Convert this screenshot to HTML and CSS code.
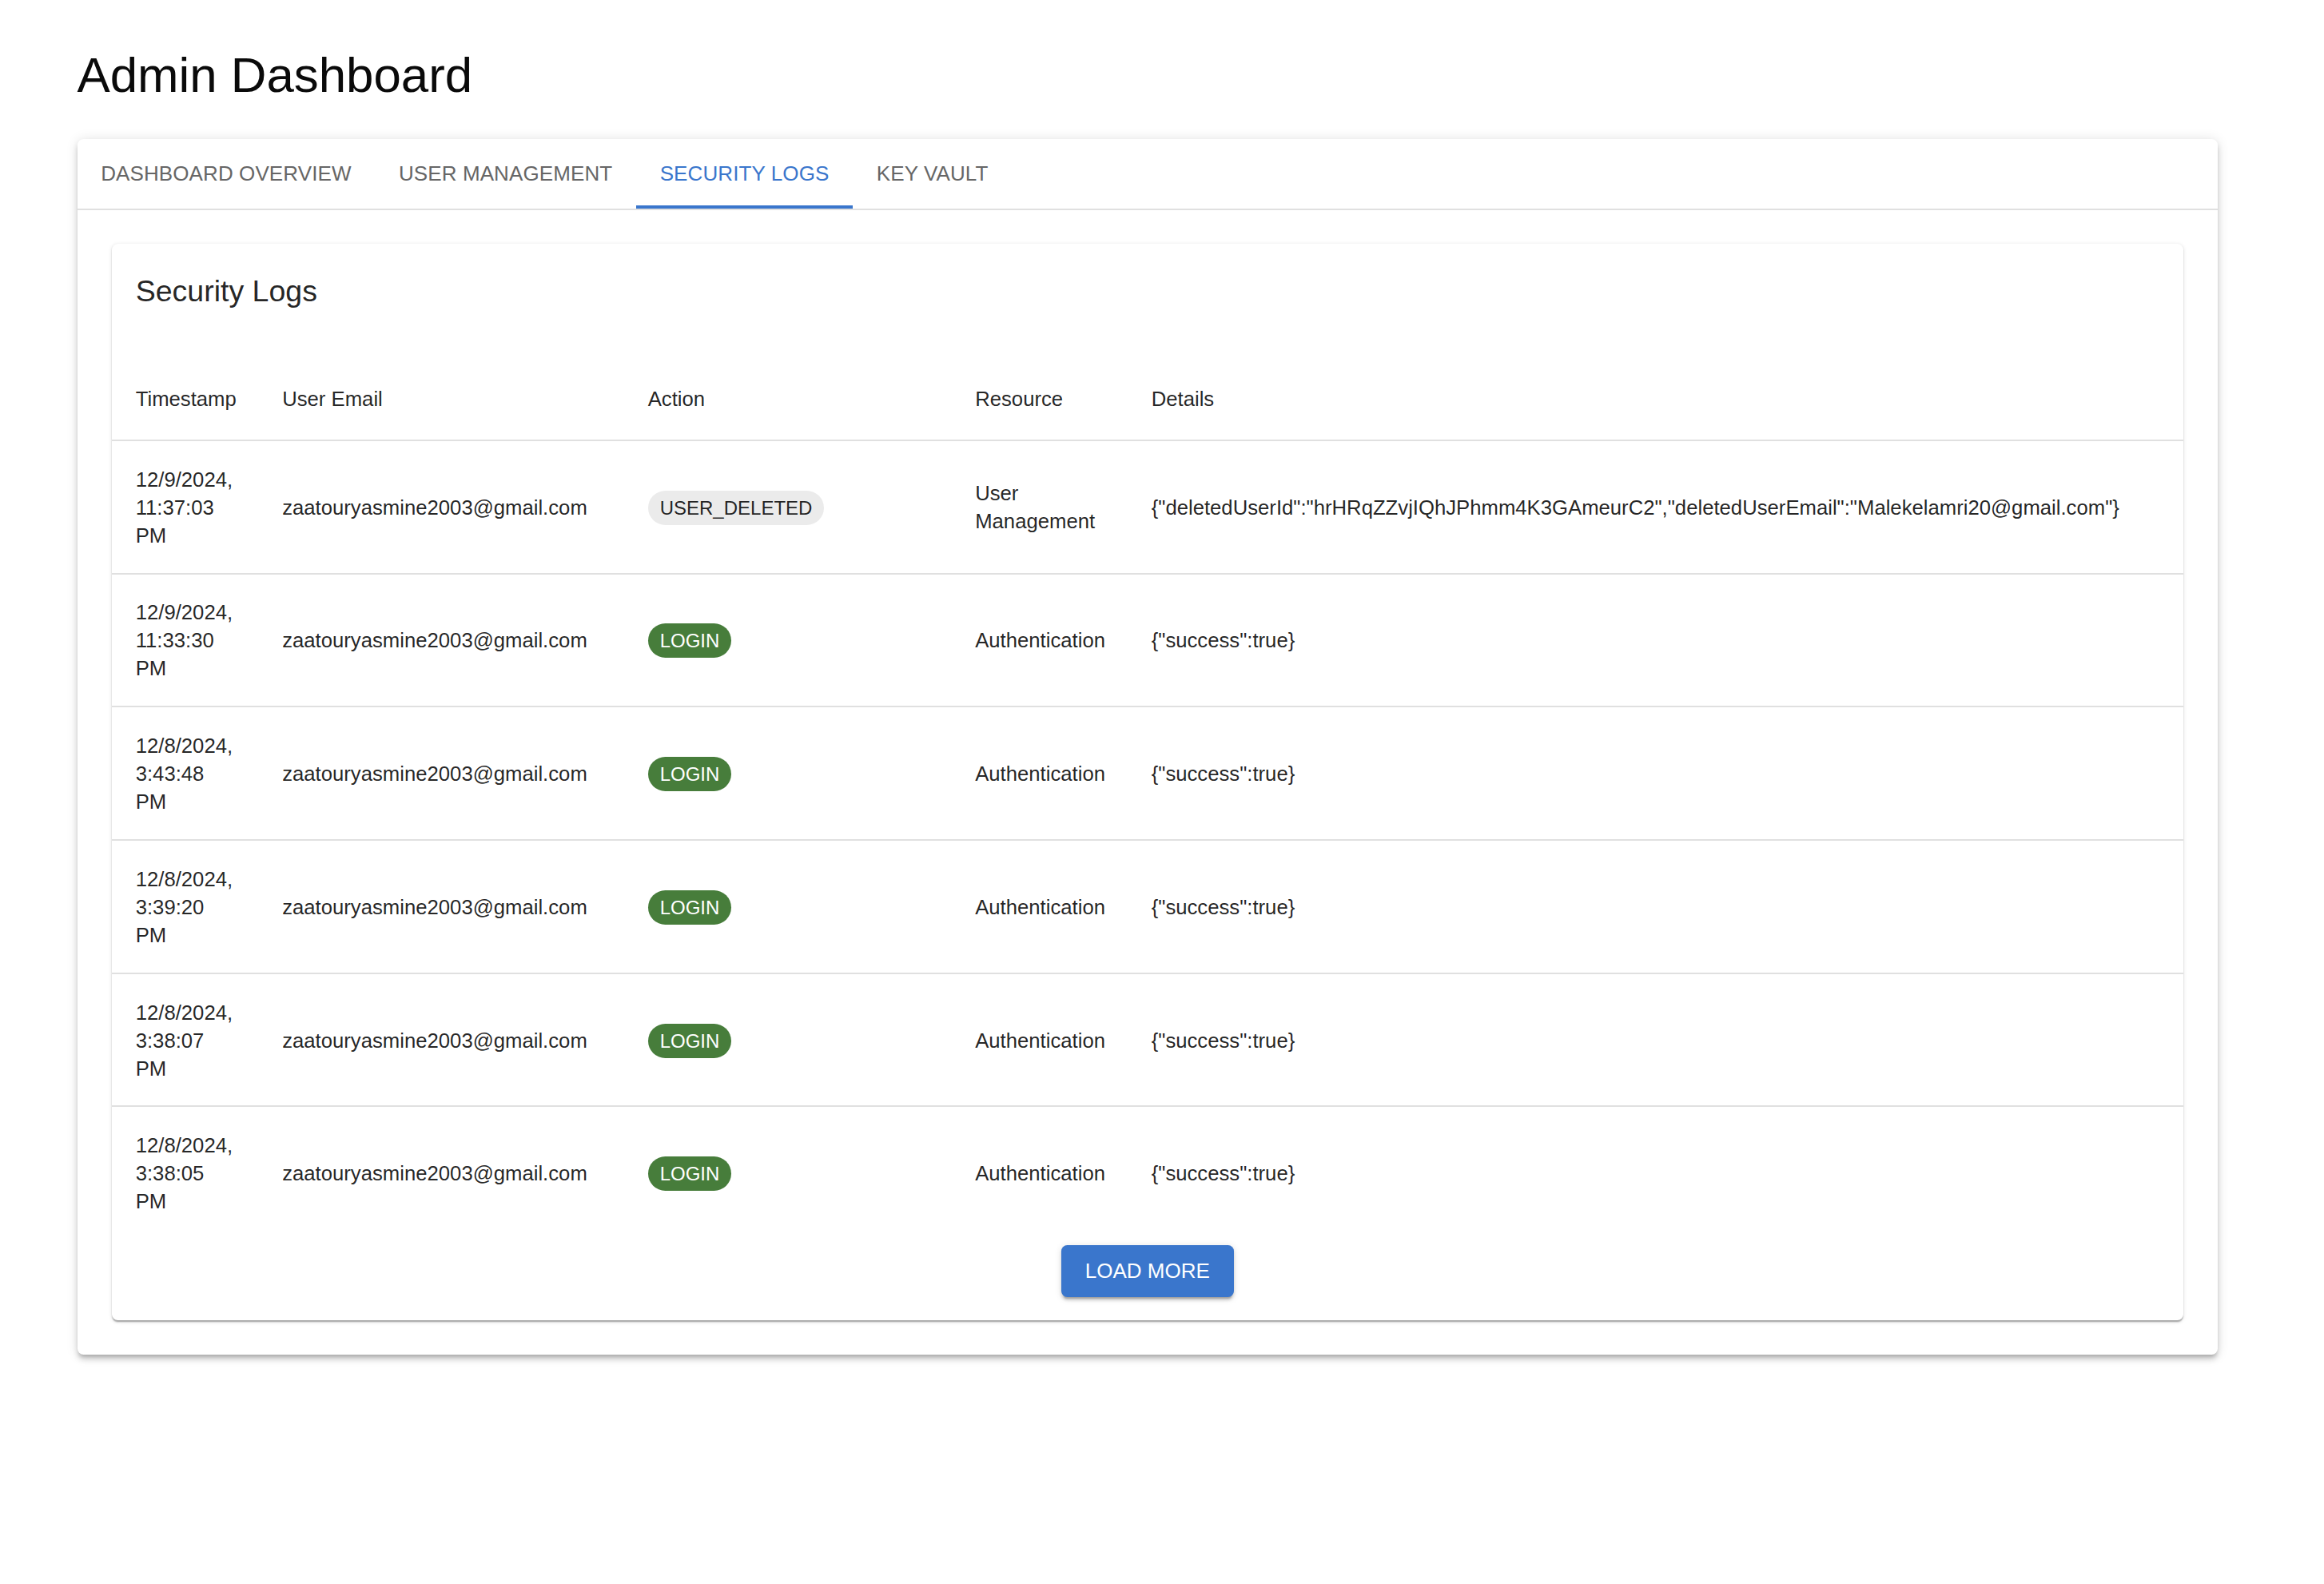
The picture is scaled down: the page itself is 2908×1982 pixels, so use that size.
FILE: index.html
```html
<!DOCTYPE html>
<html lang="en">
<head>
<meta charset="utf-8">
<title>Admin Dashboard</title>
<link rel="stylesheet" href="styles.css">
</head>
<body>
<div class="page">
  <h1 class="page-title">Admin Dashboard</h1>
  <div class="paper">
    <div class="tabs">
      <div class="tab">DASHBOARD OVERVIEW</div>
      <div class="tab">USER MANAGEMENT</div>
      <div class="tab active">SECURITY LOGS</div>
      <div class="tab">KEY VAULT</div>
    </div>
    <div class="panel">
      <div class="card">
        <h2 class="card-title">Security Logs</h2>
        <table class="logs">
          <colgroup>
            <col class="c-time">
            <col class="c-email">
            <col class="c-action">
            <col class="c-resource">
            <col>
          </colgroup>
          <thead>
            <tr>
              <th>Timestamp</th>
              <th>User Email</th>
              <th>Action</th>
              <th>Resource</th>
              <th>Details</th>
            </tr>
          </thead>
          <tbody>
            <tr>
              <td>12/9/2024, 11:37:03 PM</td>
              <td>zaatouryasmine2003@gmail.com</td>
              <td><span class="chip chip-default">USER_DELETED</span></td>
              <td>User Management</td>
              <td>{"deletedUserId":"hrHRqZZvjIQhJPhmm4K3GAmeurC2","deletedUserEmail":"Malekelamri20@gmail.com"}</td>
            </tr>
            <tr>
              <td>12/9/2024, 11:33:30 PM</td>
              <td>zaatouryasmine2003@gmail.com</td>
              <td><span class="chip chip-success">LOGIN</span></td>
              <td>Authentication</td>
              <td>{"success":true}</td>
            </tr>
            <tr>
              <td>12/8/2024, 3:43:48 PM</td>
              <td>zaatouryasmine2003@gmail.com</td>
              <td><span class="chip chip-success">LOGIN</span></td>
              <td>Authentication</td>
              <td>{"success":true}</td>
            </tr>
            <tr>
              <td>12/8/2024, 3:39:20 PM</td>
              <td>zaatouryasmine2003@gmail.com</td>
              <td><span class="chip chip-success">LOGIN</span></td>
              <td>Authentication</td>
              <td>{"success":true}</td>
            </tr>
            <tr>
              <td>12/8/2024, 3:38:07 PM</td>
              <td>zaatouryasmine2003@gmail.com</td>
              <td><span class="chip chip-success">LOGIN</span></td>
              <td>Authentication</td>
              <td>{"success":true}</td>
            </tr>
            <tr>
              <td>12/8/2024, 3:38:05 PM</td>
              <td>zaatouryasmine2003@gmail.com</td>
              <td><span class="chip chip-success">LOGIN</span></td>
              <td>Authentication</td>
              <td>{"success":true}</td>
            </tr>
          </tbody>
        </table>
        <div class="actions">
          <button class="btn" type="button">LOAD MORE</button>
        </div>
      </div>
    </div>
  </div>
</div>
</body>
</html>
```
FILE: styles.css
```css
html, body {
  margin: 0;
  padding: 0;
  background: #ffffff;
}

body {
  font-family: "Liberation Sans", Arial, Helvetica, sans-serif;
  color: rgba(0, 0, 0, 0.87);
}

.page {
  padding: 55px 133px 120px 96.5px;
}

.page-title {
  margin: 0 0 41px;
  font-size: 61.8px;
  line-height: 78px;
  font-weight: 400;
  color: #0a0a0a;
}

.paper {
  background: #ffffff;
  border-radius: 7.5px;
  box-shadow: 0 5.6px 5.6px -3.7px rgba(0, 0, 0, 0.2),
              0 5.6px 7.4px 0 rgba(0, 0, 0, 0.14),
              0 1.85px 14.8px 0 rgba(0, 0, 0, 0.12);
}

.tabs {
  display: flex;
  height: 87px;
  border-bottom: 2px solid #e0e0e0;
}

.tab {
  display: flex;
  align-items: center;
  padding: 0 29.7px;
  font-size: 26px;
  letter-spacing: 0.1px;
  color: #666666;
  white-space: nowrap;
}

.tab.active {
  color: #3a76cc;
  box-shadow: inset 0 -4px 0 #3a76cc;
}

.panel {
  padding: 42px 43.5px 43px;
}

.card {
  background: #ffffff;
  border-radius: 7.5px;
  padding: 30px 0 29px;
  box-shadow: 0 3.7px 1.85px -1.85px rgba(0, 0, 0, 0.2),
              0 1.85px 1.85px 0 rgba(0, 0, 0, 0.14),
              0 1.85px 5.5px 0 rgba(0, 0, 0, 0.12);
}

.card-title {
  margin: 0 0 52.5px;
  padding: 0 29.7px;
  font-size: 37.5px;
  line-height: 58px;
  font-weight: 400;
  color: rgba(0, 0, 0, 0.87);
}

.logs {
  width: 100%;
  border-collapse: collapse;
  table-layout: fixed;
}

.c-time { width: 183.5px; }
.c-email { width: 457.5px; }
.c-action { width: 409.5px; }
.c-resource { width: 220.5px; }

.logs th,
.logs td {
  padding: 29.5px 29.7px;
  text-align: left;
  font-size: 25.7px;
  line-height: 35px;
  vertical-align: middle;
  border-bottom: 2px solid #e0e0e0;
  color: rgba(0, 0, 0, 0.87);
}

.logs th {
  font-weight: 400;
  line-height: 44px;
  padding-top: 31.5px;
  padding-bottom: 29px;
}

.logs td {
  padding-top: 30.8px;
  padding-bottom: 28.9px;
}

.logs tbody tr:last-child td {
  border-bottom: 0;
}

.chip {
  display: inline-flex;
  align-items: center;
  height: 43px;
  padding: 0 15px;
  border-radius: 22px;
  font-size: 24px;
  white-space: nowrap;
  vertical-align: middle;
}

.chip-default {
  background: #ebebeb;
  color: rgba(0, 0, 0, 0.87);
}

.chip-success {
  background: #477d3b;
  color: #ffffff;
}

.actions {
  display: flex;
  justify-content: center;
  margin-top: 8px;
}

.btn {
  height: 65px;
  padding: 0 30px;
  border: 0;
  border-radius: 7.5px;
  background: #3a76cc;
  color: #ffffff;
  font-family: inherit;
  font-size: 26px;
  cursor: pointer;
  box-shadow: 0 5.6px 1.85px -3.7px rgba(0, 0, 0, 0.2),
              0 3.7px 3.7px 0 rgba(0, 0, 0, 0.14),
              0 1.85px 9.3px 0 rgba(0, 0, 0, 0.12);
}
```
